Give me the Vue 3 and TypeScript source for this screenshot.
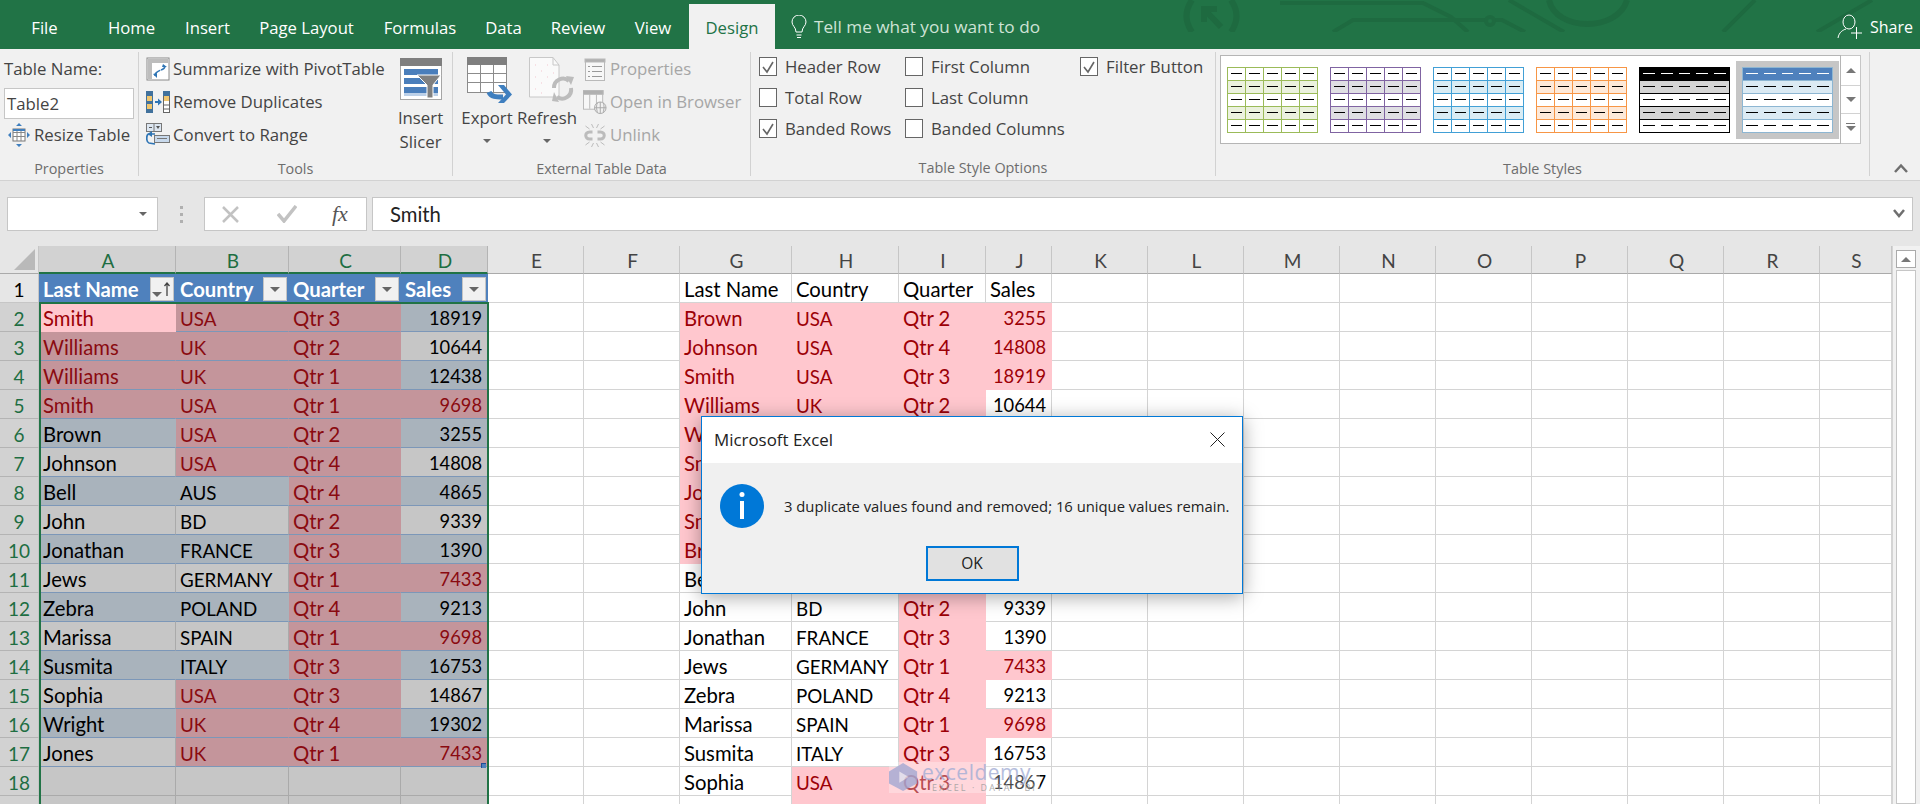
<script setup lang="ts">
import { computed } from 'vue'

interface Cell {
  text: string
  cls: string[]
  filter?: 'plain' | 'sorted'
}

const tabs = [
  { label: 'File', width: 89 },
  { label: 'Home', width: 85 },
  { label: 'Insert', width: 67 },
  { label: 'Page Layout', width: 131 },
  { label: 'Formulas', width: 96 },
  { label: 'Data', width: 71 },
  { label: 'Review', width: 78 },
  { label: 'View', width: 72 },
]

const columns: [string, number][] = [
  ['A', 137], ['B', 113], ['C', 112], ['D', 87], ['E', 96], ['F', 96],
  ['G', 112], ['H', 107], ['I', 87], ['J', 66], ['K', 96], ['L', 96],
  ['M', 96], ['N', 96], ['O', 96], ['P', 96], ['Q', 96], ['R', 96], ['S', 72],
]
const selectedCols = 'ABCD'
const columnTemplate = computed(() => '39px ' + columns.map((c) => c[1] + 'px').join(' '))

// name, country, quarter, sales, which of the four are flagged as duplicates
type Rec = [string, string, string, number, string]

const leftRows: Rec[] = [
  ['Smith', 'USA', 'Qtr 3', 18919, '1110'],
  ['Williams', 'UK', 'Qtr 2', 10644, '1110'],
  ['Williams', 'UK', 'Qtr 1', 12438, '1110'],
  ['Smith', 'USA', 'Qtr 1', 9698, '1111'],
  ['Brown', 'USA', 'Qtr 2', 3255, '0110'],
  ['Johnson', 'USA', 'Qtr 4', 14808, '0110'],
  ['Bell', 'AUS', 'Qtr 4', 4865, '0010'],
  ['John', 'BD', 'Qtr 2', 9339, '0010'],
  ['Jonathan', 'FRANCE', 'Qtr 3', 1390, '0010'],
  ['Jews', 'GERMANY', 'Qtr 1', 7433, '0011'],
  ['Zebra', 'POLAND', 'Qtr 4', 9213, '0010'],
  ['Marissa', 'SPAIN', 'Qtr 1', 9698, '0011'],
  ['Susmita', 'ITALY', 'Qtr 3', 16753, '0010'],
  ['Sophia', 'USA', 'Qtr 3', 14867, '0110'],
  ['Wright', 'UK', 'Qtr 4', 19302, '0110'],
  ['Jones', 'UK', 'Qtr 1', 7433, '0111'],
]

const rightRows: Rec[] = [
  ['Brown', 'USA', 'Qtr 2', 3255, '1111'],
  ['Johnson', 'USA', 'Qtr 4', 14808, '1111'],
  ['Smith', 'USA', 'Qtr 3', 18919, '1111'],
  ['Williams', 'UK', 'Qtr 2', 10644, '1110'],
  ['Williams', 'UK', 'Qtr 1', 12438, '1110'],
  ['Smith', 'USA', 'Qtr 1', 9698, '1111'],
  ['Johnson', 'USA', 'Qtr 4', 14808, '1111'],
  ['Smith', 'USA', 'Qtr 3', 18919, '1111'],
  ['Brown', 'USA', 'Qtr 2', 3255, '1111'],
  ['Bell', 'AUS', 'Qtr 4', 4865, '0010'],
  ['John', 'BD', 'Qtr 2', 9339, '0010'],
  ['Jonathan', 'FRANCE', 'Qtr 3', 1390, '0010'],
  ['Jews', 'GERMANY', 'Qtr 1', 7433, '0011'],
  ['Zebra', 'POLAND', 'Qtr 4', 9213, '0010'],
  ['Marissa', 'SPAIN', 'Qtr 1', 9698, '0011'],
  ['Susmita', 'ITALY', 'Qtr 3', 16753, '0010'],
  ['Sophia', 'USA', 'Qtr 3', 14867, '0110'],
  ['', '', '', 0, '0110'],
]

const headers = ['Last Name', 'Country', 'Quarter', 'Sales']

// Lato's capitals and digits run wider than the sheet font's, so those get a smaller size
function kind(i: number, v: string | number): string {
  if (i === 3) return 'num'
  return /^[A-Z]+$/.test(String(v)) ? 'caps' : ''
}

function rightCells(row: number): Cell[] {
  if (row === 1) return headers.map((text) => ({ text, cls: [] }))
  const rec = rightRows[row - 2]
  return rec.slice(0, 4).map((v, i) => ({
    text: v === 0 ? '' : String(v),
    cls: [kind(i, v), rec[4][i] === '1' ? 'dup' : ''],
  }))
}

function leftCells(row: number): Cell[] {
  if (row === 1) {
    return headers.map((text, i) => ({ text, cls: ['th'], filter: i === 0 ? 'sorted' : 'plain' }))
  }
  const rec = leftRows[row - 2]
  if (!rec) return headers.map(() => ({ text: '', cls: ['sel'] }))
  return rec.slice(0, 4).map((v, i) => {
    const cls = ['sel', 'in-table', row % 2 === 0 ? 'band' : '', kind(i, v)]
    if (rec[4][i] === '1') cls.push('dup')
    if (row === 2 && i === 0) cls.push('active')
    return { text: String(v), cls }
  })
}

const rows = computed(() => {
  const out: { num: number; cells: Cell[] }[] = []
  for (let r = 1; r <= 19; r++) {
    const blank = (n: number): Cell[] => Array.from({ length: n }, () => ({ text: '', cls: [] }))
    out.push({
      num: r,
      cells: [...leftCells(r), ...blank(2), ...rightCells(r), ...blank(9)],
    })
  }
  return out
})

const thumbs = ['green', 'purple', 'blue', 'orange', 'black flat', 'navy flat']
const checks = [
  { label: 'Header Row', on: true },
  { label: 'First Column', on: false },
  { label: 'Filter Button', on: true },
  { label: 'Total Row', on: false },
  { label: 'Last Column', on: false },
  { label: '', on: false },
  { label: 'Banded Rows', on: true },
  { label: 'Banded Columns', on: false },
]
</script>

<template>
  <div class="excel">
    <header class="titlebar">
      <svg class="circuit" viewBox="0 0 1920 32" width="1920" height="32" fill="none" stroke="#1e6a40" stroke-width="4">
        <path d="M1192 0Q1181 16 1192 32M1231 0Q1242 16 1231 32" stroke-width="6" />
        <path d="M1221 27L1204 9M1204 22V9H1217" stroke-width="6" />
        <path d="M1280 3H1423L1451 17L1468 32M1333 32L1353 20H1486M1495 20H1502L1525 32M1509 0L1564 32" />
        <circle cx="1490" cy="21" r="4" />
        <path d="M1549 0C1556 32 1618 32 1627 0" stroke-width="6" />
        <path d="M1755 0L1723 32M1872 0L1817 32" />
      </svg>
      <nav class="tabs">
        <span v-for="t in tabs" :key="t.label" class="tab" :style="{ width: t.width + 'px' }">{{ t.label }}</span>
        <span class="tab tab-active">Design</span>
        <span class="tell">
          <svg width="16" height="24" viewBox="0 0 16 24" fill="none" stroke="#fff" stroke-width="1">
            <path d="M5 17C5 12 1 11 1 7A7 7 0 0 1 15 7C15 11 11 12 11 17ZM5.500 20H10.500M6 22.500H10" />
          </svg>
          Tell me what you want to do
        </span>
      </nav>
      <span class="share">
        <svg width="25" height="26" viewBox="0 0 25 26" fill="none" stroke="#fff" stroke-width="1">
          <ellipse cx="12" cy="8" rx="6" ry="7" />
          <path d="M1 24C2 18 6 16 9 15M14 19H25M19.500 13V25" />
        </svg>
        Share
      </span>
    </header>

    <section class="ribbon">
      <div class="group g-props">
        <div class="content stack">
          <div class="line">Table Name:</div>
          <div class="line"><div class="name-input">Table2</div></div>
          <div class="line resize">
            <svg width="22" height="24" viewBox="0 0 22 24">
              <rect x="5" y="6" width="12" height="12" fill="#fff" stroke="#777" />
              <path d="M5 9.500H17M5 13.500H17M9 6V18M13 6V18" stroke="#888" fill="none" />
              <rect x="5" y="6" width="12" height="2" fill="#3f7fbf" />
              <path d="M11 0L8 3H14ZM11 24L8 21H14ZM0 12L3 9V15ZM22 12L19 9V15Z" fill="#3f7fbf" />
            </svg>
            Resize Table
          </div>
        </div>
        <div class="label">Properties</div>
      </div>

      <div class="group g-tools">
        <div class="content row">
          <div class="stack tool-list">
            <div class="line">
              <svg width="24" height="24" viewBox="0 0 24 24" fill="none">
                <rect x="1" y="1" width="22" height="22" fill="#fff" stroke="#8a8a8a" />
                <path d="M2 2H22V6H6V22H2Z" fill="#bdbdbd" />
                <path d="M9 19C9 14 13 15 14 13M19 9C19 12 17 12 15 13" stroke="#2f75b5" stroke-width="1.500" />
                <path d="M17 7L21 10H16ZM7 17L11 16V21Z" fill="#2f75b5" />
              </svg>
              Summarize with PivotTable
            </div>
            <div class="line">
              <svg width="24" height="24" viewBox="0 0 24 24">
                <rect x="0" y="1" width="7" height="22" fill="#41719c" />
                <rect x="1" y="6" width="5" height="5" fill="#f1c66d" />
                <rect x="1" y="14" width="5" height="5" fill="#f1c66d" />
                <rect x="17.500" y="1.500" width="6" height="21" fill="#fff" stroke="#666" />
                <rect x="17" y="1" width="7" height="5" fill="#41719c" />
                <rect x="18" y="6" width="5" height="5" fill="#f1c66d" />
                <path d="M18 15H23M18 19H23" stroke="#666" />
                <path d="M9 12H13" stroke="#2f75b5" stroke-width="2" />
                <path d="M12 8.500L16 12L12 15.500Z" fill="#2f75b5" />
              </svg>
              Remove Duplicates
            </div>
            <div class="line">
              <svg width="24" height="24" viewBox="0 0 24 24" fill="none">
                <rect x="0.500" y="0.500" width="15" height="8" fill="#dce6f1" stroke="#777" />
                <path d="M8 1V8" stroke="#777" />
                <path d="M3 4.500H6" stroke="#555" />
                <path d="M10 3H14L12 6Z" fill="#555" />
                <rect x="8.500" y="12.500" width="15" height="7" fill="#c8d9ec" stroke="#777" />
                <path d="M11 15.500H21" stroke="#777" />
                <path d="M9 11H3C0 11 0 19 3 20L9 21" stroke="#2f75b5" stroke-width="1.700" />
                <path d="M6 8L1.500 11L6 14Z" fill="#2f75b5" />
              </svg>
              Convert to Range
            </div>
          </div>
          <div class="big slicer">
            <svg width="42" height="46" viewBox="0 0 42 46">
              <rect x="0.500" y="4.500" width="41" height="41" fill="#fff" stroke="#a6a6a6" />
              <rect x="0" y="4" width="42" height="8" fill="#7f7f7f" />
              <rect x="4" y="15" width="34" height="6" fill="#4a7ebb" />
              <rect x="4" y="24" width="34" height="6" fill="#4a7ebb" />
              <rect x="4" y="33" width="34" height="6" fill="#4a7ebb" />
              <rect x="4" y="39" width="34" height="3" fill="#bcd0e8" />
              <path d="M17 21H41L33 31V44H27V31Z" fill="#808080" stroke="#fff" />
            </svg>
            <span>Insert</span>
            <span>Slicer</span>
          </div>
        </div>
        <div class="label">Tools</div>
      </div>

      <div class="group g-ext">
        <div class="content row">
          <div class="big export">
            <svg width="46" height="46" viewBox="0 0 46 46" fill="none">
              <rect x="0.500" y="0.500" width="39" height="35" fill="#fff" stroke="#8c8c8c" />
              <rect x="0" y="0" width="40" height="8" fill="#7f7f7f" />
              <path d="M0 16.500H40M0 25.500H40M13.500 8V36M26.500 8V36" stroke="#8c8c8c" />
              <path d="M22 35C24 40 29 40 36 40" stroke="#3f7fbf" stroke-width="5" />
              <path d="M31 28L39 37.500L31 46H37L45 37.500L37 28Z" fill="#3f7fbf" />
            </svg>
            <span>Export</span>
            <i class="caret"></i>
          </div>
          <div class="big refresh">
            <svg width="46" height="46" viewBox="0 0 46 46" fill="none">
              <path d="M0.500 0.500H24L30 8V40H0.500Z" fill="#fafafa" stroke="#c8c8c8" />
              <path d="M24 0.500V8H30" stroke="#c8c8c8" />
              <path d="M6 8h1M12 14h1M18 8h1M6 20h1M12 26h1M18 20h1M6 32h1M12 36h1M24 16h1" stroke="#f2c6cf" />
              <path d="M25 31A9 9 0 0 1 40 24M42 31A9 9 0 0 1 28 40" stroke="#bcbcbc" stroke-width="4" />
              <path d="M37 19L45 20L42 28ZM30 45L23 44L25 35Z" fill="#bcbcbc" />
            </svg>
            <span>Refresh</span>
            <i class="caret"></i>
          </div>
          <div class="stack ext-list">
            <div class="line">
              <svg width="20" height="24" viewBox="0 0 20 24" fill="none" stroke="#b9b9b9">
                <rect x="0.500" y="2.500" width="19" height="21" fill="#f7f7f7" />
                <rect x="0" y="2" width="20" height="3" fill="#b0b0b0" />
                <path d="M7 9.500H17M7 14.500H17M7 19.500H17M3 9.500H5M3 14.500H5M3 19.500H5" stroke="#999" />
              </svg>
              <span class="tx">Properties</span>
            </div>
            <div class="line">
              <svg width="25" height="26" viewBox="0 0 25 26" fill="none" stroke="#b9b9b9">
                <rect x="0.500" y="1.500" width="20" height="19" fill="#f7f7f7" />
                <rect x="0" y="1" width="21" height="4" fill="#b0b0b0" />
                <path d="M7 5V20M14 5V20" />
                <circle cx="18" cy="19" r="6" fill="#f1f1f1" stroke="#a8a8a8" />
                <path d="M12 19H24M18 13V25M15 14C13 18 15 23 15 24M21 14C23 18 21 23 21 24" stroke="#a8a8a8" />
              </svg>
              <span class="tx">Open in Browser</span>
            </div>
            <div class="line">
              <svg width="21" height="26" viewBox="0 0 21 26" fill="none" stroke="#bcbcbc">
                <path d="M8 10H5C0 10 0 17 5 17H8M13 10H16C21 10 21 17 16 17H13" stroke-width="3" />
                <path d="M7 2L9 6M14 2L12 6M7 25L9 21M14 25L12 21M1 4L5 7M20 4L16 7M1 23L5 20M20 23L16 20" />
              </svg>
              <span class="tx">Unlink</span>
            </div>
          </div>
        </div>
        <div class="label">External Table Data</div>
      </div>

      <div class="group g-opts">
        <div class="content checks">
          <div v-for="(c, i) in checks" :key="i" class="check-row">
            <template v-if="c.label">
              <span class="box">
                <svg v-if="c.on" width="16" height="16" viewBox="0 0 16 16" fill="none" stroke="#666" stroke-width="1.600">
                  <path d="M3 8L7 13L13 3" />
                </svg>
              </span>
              {{ c.label }}
            </template>
          </div>
        </div>
        <div class="label">Table Style Options</div>
      </div>

      <div class="group g-styles">
        <div class="content gallery-wrap">
          <div class="gallery">
            <div v-for="t in thumbs" :key="t" class="thumb" :class="t">
              <template v-for="r in 5" :key="r">
                <i
                  v-for="c in 5"
                  :key="c"
                  :class="{ head: r === 1, stripe: r === 2 || r === 4 }"
                ></i>
              </template>
            </div>
          </div>
          <div class="gallery-nav">
            <span><i class="up"></i></span>
            <span><i class="down"></i></span>
            <span class="more"><i class="down"></i></span>
          </div>
        </div>
        <div class="label">Table Styles</div>
      </div>

      <svg class="collapse" width="14" height="10" viewBox="0 0 14 10" fill="none" stroke="#6f6f6f" stroke-width="2.500">
        <path d="M1 9L7 2.500L13 9" />
      </svg>
    </section>

    <section class="formula">
      <div class="namebox"><i class="caret"></i></div>
      <div class="dots"><b></b><b></b><b></b></div>
      <div class="fx-box">
        <svg width="17" height="17" viewBox="0 0 17 17" stroke="#c2c2c2" stroke-width="2.500"><path d="M1 1L16 16M16 1L1 16" /></svg>
        <svg width="20" height="18" viewBox="0 0 20 18" fill="none" stroke="#c2c2c2" stroke-width="3.500"><path d="M1 9L7 16L19 1" /></svg>
        <span class="fx">fx</span>
      </div>
      <div class="formula-input">
        <span>Smith</span>
        <svg width="12" height="10" viewBox="0 0 12 10" fill="none" stroke="#6f6f6f" stroke-width="2.500"><path d="M1 1L6 7L11 1" /></svg>
      </div>
    </section>

    <section class="sheet">
      <div class="grid" :style="{ gridTemplateColumns: columnTemplate }">
        <div class="corner"><i></i></div>
        <div
          v-for="c in columns"
          :key="c[0]"
          class="col-head"
          :class="{ on: selectedCols.includes(c[0]) }"
        >{{ c[0] }}</div>
        <template v-for="row in rows" :key="row.num">
          <!-- row 19 only shows its top 8px, above where its number would start -->
          <div class="row-head" :class="{ on: row.num > 1 }">{{ row.num < 19 ? row.num : '' }}</div>
          <div v-for="(cell, i) in row.cells" :key="i" class="cell" :class="cell.cls">
            <span>{{ cell.text }}</span>
            <span v-if="cell.filter" class="filter" :class="cell.filter">
              <i></i>
              <svg v-if="cell.filter === 'sorted'" width="6" height="14" viewBox="0 0 6 14" fill="none" stroke="#444" stroke-width="1.300">
                <path d="M3 14V1M0.500 4L3 1L5.500 4" />
              </svg>
            </span>
          </div>
        </template>
      </div>
      <div class="selection"><i class="handle"></i></div>
      <div class="scrollbar">
        <span class="arrow"><i class="up"></i></span>
        <span class="thumb-bar"></span>
      </div>
      <div class="watermark">
        <svg width="30" height="30" viewBox="0 0 32 30">
          <path d="M15 0L30 9V22L15 30L0 22V9Z" fill="#a9aed6" />
          <path d="M11 9L21 15L11 21Z" fill="#dfe1f0" />
        </svg>
        <div class="wm-text">
          <span class="wm-name">exceldemy</span>
          <span class="wm-sub">EXCEL · DATA · BI</span>
        </div>
      </div>
      <div class="dialog">
        <div class="dialog-title">
          <span>Microsoft Excel</span>
          <svg width="15" height="15" viewBox="0 0 15 15" stroke="#222" stroke-width="1"><path d="M0.500 0.500L14.500 14.500M14.500 0.500L0.500 14.500" /></svg>
        </div>
        <div class="dialog-body">
          <div class="dialog-msg">
            <svg width="44" height="44" viewBox="0 0 44 44">
              <ellipse cx="22" cy="22" rx="22" ry="22" fill="#0078d7" />
              <circle cx="22" cy="10.500" r="2.500" fill="#fff" />
              <rect x="20" y="17" width="4" height="18" fill="#fff" />
            </svg>
            <span>3 duplicate values found and removed; 16 unique values remain.</span>
          </div>
          <div class="ok">OK</div>
        </div>
      </div>
    </section>
  </div>
</template>

<style>
html, body { margin: 0; background: #fff; overflow: hidden; }
</style>

<style scoped>
.excel {
  width: 1920px;
  height: 804px;
  overflow: hidden;
  display: flex;
  flex-direction: column;
  font-family: "Open Sans", "Noto Sans", sans-serif;
  font-size: 16.800px;
  color: #444;
}
.titlebar {
  position: relative;
  height: 49px;
  flex: none;
  background: #217346;
  color: #fff;
  display: flex;
  justify-content: space-between;
}
.circuit { position: absolute; left: 0; top: 0; }
.tabs { position: relative; display: flex; align-items: flex-end; }
.tab {
  height: 45px;
  line-height: 47px;
  text-align: center;
  font-size: 16.700px;
}
.tab-active {
  width: 86px;
  background: #f1f1f1;
  color: #217346;
}
.tell {
  height: 45px;
  margin-left: 16px;
  display: flex;
  align-items: center;
  gap: 7px;
  color: #cfe3d6;
  font-size: 17.200px;
}
.share {
  position: relative;
  display: flex;
  align-items: center;
  gap: 8px;
  padding: 4px 7px 0 0;
  font-size: 16px;
}

.ribbon {
  position: relative;
  height: 132px;
  flex: none;
  display: flex;
  background: #f1f1f1;
  border-bottom: 1px solid #d2d2d2;
  box-sizing: border-box;
}
.group {
  height: 124px;
  margin-top: 3px;
  box-sizing: border-box;
  border-right: 1px solid #d2d2d2;
  display: flex;
  flex-direction: column;
}
.g-props { width: 139px; }
.g-tools { width: 314px; }
.g-ext { width: 298px; }
.g-opts { width: 465px; }
.g-styles { width: 654px; }
.content { height: 110px; box-sizing: border-box; }
.label {
  height: 14px;
  line-height: 14px;
  text-align: center;
  font-size: 14.400px;
  color: #6d6d6d;
}
.stack {
  display: grid;
  grid-auto-rows: 33px;
  align-content: start;
}
.line { display: flex; align-items: center; gap: 3px; white-space: nowrap; }
.row { display: flex; }
.g-props .stack { padding-left: 4px; }
.name-input {
  width: 130px;
  height: 31px;
  margin-top: 3px;
  box-sizing: border-box;
  background: #fff;
  border: 1px solid #c6c6c6;
  padding-left: 2px;
  line-height: 29px;
  color: #444;
}
.resize { padding-left: 4px; gap: 4px; }
.g-tools .row { padding-left: 7px; }
.tool-list { width: 253px; }
.big {
  display: flex;
  flex-direction: column;
  align-items: center;
  padding-top: 5px;
  line-height: 24px;
  height: 105px;
  box-sizing: border-box;
}
.big svg { margin-bottom: 3px; }
.big span { height: 24px; }
.slicer { width: 43px; }
.slicer svg { margin: -3px 0 6px; }
.g-ext .row { padding-left: 9px; }
.export { width: 50px; align-items: center; }
.refresh { width: 56px; margin-left: 7px; }
.export svg { margin-left: 5px; }
.refresh svg { margin-left: 10px; }
.caret {
  display: block;
  width: 0;
  height: 0;
  border: 4px solid transparent;
  border-top: 4px solid #666;
  border-bottom: 0;
  margin-top: 9px;
}
.namebox .caret { margin-top: 8px; }
.ext-list { margin-left: 8px; }
.ext-list .line { gap: 3px; }
.ext-list .line svg { width: 24px; }
.tx { color: #a6a6a6; }
.checks {
  display: grid;
  grid-template-columns: 146px 175px auto;
  grid-auto-rows: 31px;
  padding-left: 8px;
  margin-top: -1px;
}
.check-row { display: flex; align-items: center; gap: 8px; white-space: nowrap; }
.box {
  width: 18px;
  height: 19px;
  box-sizing: border-box;
  border: 1px solid #666;
  background: #fff;
  display: flex;
  align-items: center;
  justify-content: center;
}
.gallery-wrap { display: flex; padding: 3px 0 0 4px; }
.gallery {
  width: 621px;
  height: 89px;
  box-sizing: border-box;
  background: #fff;
  border: 1px solid #b5b5b5;
  padding: 11px 0 0 6px;
  display: flex;
  gap: 12px;
}
.thumb {
  --line: #9bbb59;
  --stripe: #ebf1de;
  width: 91px;
  height: 66px;
  box-sizing: border-box;
  padding: 1px;
  background: var(--line);
  display: grid;
  grid-template-columns: repeat(5, 17px);
  grid-auto-rows: 12px;
  gap: 1px;
}
.thumb i {
  position: relative;
  background: #fff;
}
.thumb i::after {
  content: '';
  position: absolute;
  left: 3px;
  right: 3px;
  top: 5px;
  height: 1px;
  background: #000;
}
.thumb i.stripe { background: var(--stripe); }
.purple { --line: #8064a2; --stripe: #dfdfe3; }
.blue { --line: #42a0d6; --stripe: #d9ecf4; }
.orange { --line: #f79646; --stripe: #fde9d9; }
.flat { grid-template-columns: repeat(5, 17.800px); column-gap: 0; }
.black { --line: #000; --stripe: #d4d4d4; }
.black i.head { background: #000; }
.black i.head::after, .navy i.head::after { background: #fff; }
.navy {
  --line: #8db6d2;
  --stripe: #dbeaf3;
  box-shadow: 0 0 0 6px #c6c6c6;
}
.navy i.head { background: #4f81bd; }
.gallery-nav {
  width: 20px;
  height: 89px;
  box-sizing: border-box;
  border: 1px solid #c6c6c6;
  border-left: 0;
  background: #fff;
  display: grid;
  grid-template-rows: 30px 28px 29px;
}
.gallery-nav span {
  display: flex;
  align-items: center;
  justify-content: center;
  border-bottom: 1px solid #d2d2d2;
}
.gallery-nav span:last-child { border-bottom: 0; }
.up, .down {
  display: block;
  width: 0;
  height: 0;
  border: 5px solid transparent;
  border-bottom: 5px solid #777;
  border-top: 0;
}
.down { border-top: 5px solid #777; border-bottom: 0; }
.more { position: relative; }
.more::before {
  content: '';
  position: absolute;
  left: 5px;
  right: 5px;
  top: 9px;
  height: 1px;
  background: #777;
}
.collapse { position: absolute; left: 1894px; top: 114px; }

.formula {
  height: 65px;
  flex: none;
  box-sizing: border-box;
  background: #e6e6e6;
  padding-top: 16px;
  display: flex;
  align-items: flex-start;
}
.namebox {
  width: 151px;
  height: 34px;
  margin-left: 7px;
  box-sizing: border-box;
  background: #fff;
  border: 1px solid #c6c6c6;
  display: flex;
  justify-content: flex-end;
  padding: 6px 10px 0 0;
}
.dots {
  width: 46px;
  height: 34px;
  display: flex;
  flex-direction: column;
  align-items: center;
  justify-content: center;
  gap: 4px;
}
.dots b { width: 3px; height: 3px; background: #b0b0b0; }
.fx-box {
  width: 163px;
  height: 34px;
  box-sizing: border-box;
  background: #fff;
  border: 1px solid #c6c6c6;
  display: flex;
  align-items: center;
  gap: 38px;
  padding-left: 17px;
}
.fx {
  font-family: "Liberation Serif", serif;
  font-style: italic;
  font-size: 22px;
  color: #555;
  margin-left: -3px;
}
.formula-input {
  flex: none;
  width: 1541px;
  height: 34px;
  margin-left: 5px;
  box-sizing: border-box;
  background: #fff;
  border: 1px solid #c6c6c6;
  display: flex;
  align-items: center;
  justify-content: space-between;
  padding: 0 7px 0 17px;
  font-family: Lato, sans-serif;
  font-size: 20.300px;
  color: #222;
}

.sheet {
  position: relative;
  flex: 1;
  min-height: 0;
  overflow: hidden;
  background: #fff;
}
.grid {
  display: grid;
  grid-auto-rows: 29px;
  grid-template-rows: 28px;
  font-family: Lato, sans-serif;
  font-size: 20.300px;
  color: #000;
}
.corner {
  background: #e6e6e6;
  border-right: 1px solid #c6c6c6;
  border-bottom: 1px solid #aaa;
  position: relative;
}
.corner i {
  position: absolute;
  right: 3px;
  bottom: 3px;
  width: 21px;
  height: 21px;
  background: #b9b9b9;
  clip-path: polygon(100% 0, 100% 100%, 0 100%);
}
.col-head {
  background: #e6e6e6;
  border-right: 1px solid #c6c6c6;
  border-bottom: 1px solid #aaa;
  text-align: center;
  text-indent: 2px;
  line-height: 30px;
  font-size: 19px;
  color: #444;
}
.col-head.on {
  background: #d2d2d2;
  color: #1e6e42;
  border-right-color: #b4b4b4;
  border-bottom: 2px solid #217346;
}
.row-head {
  background: #e6e6e6;
  border-right: 1px solid #c6c6c6;
  border-bottom: 1px solid #c6c6c6;
  text-align: center;
  line-height: 31px;
  font-size: 19px;
}
.row-head.on {
  background: #d2d2d2;
  color: #1e6e42;
  border-bottom-color: #b4b4b4;
}
.cell {
  box-sizing: border-box;
  border-right: 1px solid #d4d4d4;
  border-bottom: 1px solid #d4d4d4;
  padding: 0 3px 0 4px;
  line-height: 31px;
  white-space: nowrap;
  display: flex;
  justify-content: space-between;
}
.num { justify-content: flex-end; padding-right: 5px; font-size: 18.300px; }
.caps { font-size: 18.800px; }
.dup {
  background: #ffc7ce;
  color: #9c0006;
  border-color: #ffc7ce;
}
.th {
  background: #4f81bd;
  color: #fff;
  font-weight: 700;
  border-color: #4f81bd;
  padding-right: 1px;
  border-bottom-color: #c6c6c6;
}
.filter {
  width: 24px;
  height: 24px;
  margin-top: 3px;
  box-sizing: border-box;
  background: #f1f1f1;
  border: 1px solid #c4c4c4;
  display: flex;
  align-items: center;
  justify-content: center;
  gap: 2px;
}
.filter i {
  display: block;
  width: 0;
  height: 0;
  border: 5px solid transparent;
  border-top: 5px solid #666;
  border-bottom: 0;
}
.filter.sorted i { margin-top: 10px; }
.filter.sorted { justify-content: flex-end; padding-right: 3px; }
.sel {
  background: #c6c6c6;
  border-color: #aaa;
}
.in-table { border-bottom-color: #7c97b8; }
.sel.band { background: #a9b3bc; border-right-color: #a9b3bc; }
.sel.dup {
  background: #c4959b;
  color: #8a0a10;
  border-right-color: #c4959b;
}
.sel.active {
  background: #ffc7ce;
  color: #9c0006;
  border-right-color: #ffc7ce;
  border-bottom-color: #ffc7ce;
}
.selection {
  position: absolute;
  left: 39px;
  top: 56px;
  width: 450px;
  height: 520px;
  box-sizing: border-box;
  border: 2px solid #217346;
  pointer-events: none;
}
.handle {
  position: absolute;
  right: 1px;
  top: 459px;
  width: 4px;
  height: 4px;
  border-left: 1px solid #1f4e99;
  border-top: 1px solid #1f4e99;
  background: #4f81bd;
}
.scrollbar {
  position: absolute;
  right: 0;
  top: 0;
  bottom: 0;
  width: 28px;
  background: #f1f1f1;
  border-left: 1px solid #d4d4d4;
  box-sizing: border-box;
  display: flex;
  flex-direction: column;
}
.arrow {
  display: flex;
  align-items: center;
  justify-content: center;
  width: 20px;
  height: 18px;
  margin: 4px 0 0 3px;
  background: #fff;
  border: 1px solid #aaa;
  box-sizing: border-box;
}
.thumb-bar {
  flex: 1;
  width: 20px;
  margin: 2px 0 0 3px;
  box-sizing: border-box;
  background: #fff;
  border: 1px solid #c6c6c6;
}
.watermark {
  position: absolute;
  left: 889px;
  top: 516px;
  width: 151px;
  height: 31px;
  background: rgba(255, 255, 255, 0.35);
  display: flex;
  gap: 3px;
  opacity: 0.85;
}
.wm-text { display: flex; flex-direction: column; line-height: 1; }
.wm-name {
  font-family: "Open Sans", sans-serif;
  font-size: 21px;
  letter-spacing: 0.500px;
  color: #a9b3d8;
  height: 21px;
}
.wm-sub {
  font-family: "Open Sans", sans-serif;
  font-size: 9px;
  letter-spacing: 2px;
  color: #a2a2a2;
  padding-left: 10px;
  white-space: nowrap;
}
.dialog {
  position: absolute;
  left: 701px;
  top: 170px;
  width: 542px;
  height: 178px;
  box-sizing: border-box;
  border: 1px solid #0078d7;
  box-shadow: 0 3px 18px rgba(0, 0, 0, 0.35);
  display: flex;
  flex-direction: column;
  background: #f0f0f0;
  color: #222;
}
.dialog-title {
  height: 44px;
  flex: none;
  background: #fff;
  display: flex;
  align-items: center;
  justify-content: space-between;
  padding: 0 17px 2px 12px;
  font-size: 16.900px;
}
.dialog-body {
  flex: 1;
  display: flex;
  flex-direction: column;
  align-items: center;
  padding-top: 21px;
}
.dialog-msg {
  width: 100%;
  box-sizing: border-box;
  padding-left: 18px;
  display: flex;
  align-items: center;
  gap: 20px;
  font-size: 14.800px;
  white-space: nowrap;
}
.ok {
  width: 93px;
  height: 35px;
  box-sizing: border-box;
  margin-top: 18px;
  border: 2px solid #0078d7;
  background: #e1e1e1;
  text-align: center;
  line-height: 31px;
  font-size: 15.500px;
}
</style>
